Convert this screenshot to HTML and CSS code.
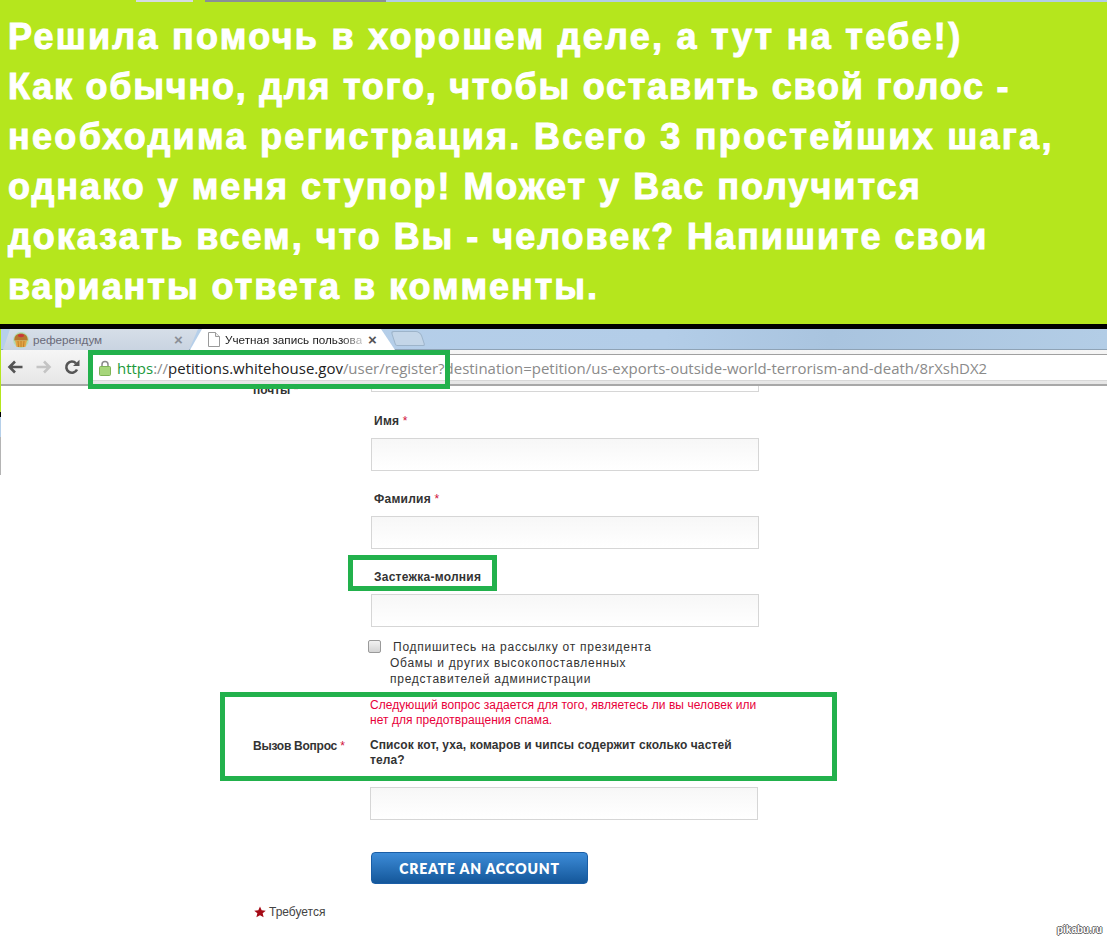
FILE: index.html
```html
<!DOCTYPE html>
<html lang="ru">
<head>
<meta charset="utf-8">
<title>Решила помочь в хорошем деле</title>
<link rel="stylesheet" href="styles.css">
</head>
<body>
<div class="screen">
  <div class="strip">
    <span class="s s1"></span><span class="s s2"></span><span class="s s3"></span><span class="s s4"></span><span class="s s5"></span>
  </div>
  <div class="banner">
    <p class="banner-text"><span class="ln l1">Решила помочь в хорошем деле, а тут на тебе!)</span><span class="ln l2">Как обычно, для того, чтобы оставить свой голос -</span><span class="ln l3">необходима регистрация. Всего 3 простейших шага,</span><span class="ln l4">однако у меня ступор! Может у Вас получится</span><span class="ln l5">доказать всем, что Вы - человек? Напишите свои</span><span class="ln l6">варианты ответа в комменты.</span></p>
  </div>
  <div class="rule"></div>

  <div class="page">
    <div class="sliver">
      <span class="sl-green"></span><span class="sl-black"></span><span class="sl-blue"></span><span class="sl-gray"></span>
    </div>
    <div class="main">
      <div class="tabs">
        <div class="tab tab-off">
          <svg class="fav" viewBox="0 0 16 16" width="16" height="16">
            <circle cx="8" cy="8" r="7.9" fill="#9ce08a" opacity=".55"/>
            <path d="M1.300 8.500C1 4 4 1.500 8 1.500S15 4 14.700 8.500z" fill="#b5782f"/>
            <ellipse cx="8" cy="3.600" rx="3" ry="1.700" fill="#c9363a"/>
            <path d="M2 8.500h12l-1.600 6.500H3.600z" fill="#e3a545"/>
            <path d="M5 9l.6 6M8 9v6M11 9l-.6 6" stroke="#b87a24" stroke-width=".8"/>
          </svg>
          <span class="tab-title">референдум</span>
          <span class="tab-x off">×</span>
        </div>
        <div class="tab tab-on">
          <svg class="doc" viewBox="0 0 12 15" width="12" height="15">
            <path d="M.5.500h7l4 4v10H.500z" fill="#fff" stroke="#9a9a9a"/>
            <path d="M7.500.500v4h4" fill="#eee" stroke="#9a9a9a"/>
          </svg>
          <span class="tab-title dark">Учетная запись пользова</span>
          <span class="tab-x on">×</span>
        </div>
        <div class="tab-new"></div>
      </div>
      <div class="toolbar">
        <svg class="nav" viewBox="0 0 16 14" width="16" height="14"><path d="M8 1.500 2.500 7 8 12.500M3 7h12.500" fill="none" stroke="#555" stroke-width="2.600"/></svg>
        <svg class="nav" viewBox="0 0 16 14" width="16" height="14"><path d="M8 1.500 13.500 7 8 12.500M13 7H.5" fill="none" stroke="#c4c4c4" stroke-width="2.600"/></svg>
        <svg class="nav reload" viewBox="0 0 16 16" width="16" height="16"><path d="M13 10.500A5.600 5.600 0 1 1 12 4.300" fill="none" stroke="#555" stroke-width="2.600"/><path d="M9 7h6.500V.800z" fill="#555"/></svg>
        <div class="omnibox">
          <svg class="lock" viewBox="0 0 12 16" width="12" height="16">
            <path d="M3 7V4.500a3 3 0 0 1 6 0V7" fill="none" stroke="#8a8a8a" stroke-width="1.500"/>
            <rect x=".5" y="6.500" width="11" height="9" rx="1" fill="#a6d67a" stroke="#7fb356"/>
          </svg>
          <span class="url"><span class="https">https</span><span class="path">://</span><span class="host">petitions.whitehouse.gov</span><span class="path">/user/register?destination=petition/us-exports-outside-world-terrorism-and-death/8rXshDX2</span></span>
        </div>
      </div>

      <form class="form">
        <div class="row row-email">
          <div class="side-label clipped">почты <em>*</em></div>
          <div class="input stub"></div>
        </div>
        <div class="field f-name">
          <label class="label">Имя <em>*</em></label>
          <div class="input"></div>
        </div>
        <div class="field f-last">
          <label class="label">Фамилия <em>*</em></label>
          <div class="input"></div>
        </div>
        <div class="field f-zip">
          <label class="label">Застежка-молния</label>
          <div class="input"></div>
        </div>
        <div class="subscribe">
          <span class="checkbox"></span>
          <p class="sub-text"><span class="sub-first">Подпишитесь на рассылку от президента</span><br>Обамы и других высокопоставленных<br>представителей администрации</p>
        </div>
        <div class="challenge">
          <div class="side-label ch-label">Вызов Вопрос <em>*</em></div>
          <div class="ch-body">
            <p class="warn">Следующий вопрос задается для того, являетесь ли вы человек или нет для предотвращения спама.</p>
            <p class="question">Список кот, уха, комаров и чипсы содержит сколько частей тела?</p>
            <div class="input"></div>
            <button class="submit" type="button">CREATE AN ACCOUNT</button>
          </div>
        </div>
        <div class="required">
          <svg viewBox="0 0 24 24" width="12" height="12"><path d="M12 1l3.300 7.600 8.200.7-6.200 5.400 1.900 8L12 18.500 4.800 22.700l1.900-8L.5 9.300l8.200-.7z" fill="#a50a16"/></svg>
          <span>Требуется</span>
        </div>
      </form>
    </div>
  </div>

  <div class="mark mark-url"></div>
  <div class="mark mark-zip"></div>
  <div class="mark mark-q"></div>
  <div class="watermark">pikabu.ru</div>
</div>
</body>
</html>
```
FILE: styles.css
```css
* { box-sizing: border-box; }
html, body { margin: 0; padding: 0; background: #fff; }
.screen { position: relative; width: 1107px; height: 941px; overflow: hidden; font-family: "Liberation Sans", Arial, sans-serif; }

.strip { display: flex; height: 2px; background: #b5e61d; }
.s { display: block; height: 2px; }
.s1 { width: 136px; }
.s2 { width: 57px; background: #d5dbe2; }
.s3 { width: 12px; background: #b5e61d; }
.s4 { width: 181px; background: #8a8f96; }
.s5 { flex: 1; background: #b3cde6; }

.banner { height: 322px; background: #b5e61d; padding: 10px 0 0 8px; }
.banner-text { margin: 0; color: #fff; font: bold 36px/50px "Liberation Sans", Arial, sans-serif; -webkit-text-stroke: 1px #fff; white-space: nowrap; }
.ln { display: block; }
.l1 { letter-spacing: 2.27px; }
.l2 { letter-spacing: 1.76px; }
.l3 { letter-spacing: 2.29px; }
.l4 { letter-spacing: 2px; }
.l5 { letter-spacing: 1.98px; }
.l6 { letter-spacing: 1.96px; }
.rule { height: 5px; background: #000; }

.page { display: flex; }
.sliver { width: 1px; flex: none; display: flex; flex-direction: column; }
.sliver span { display: block; width: 1px; }
.sl-green { height: 83px; background: #b5e61d; }
.sl-black { height: 5px; background: #000; }
.sl-blue { height: 20px; background: #b5cfe9; }
.sl-gray { height: 38px; background: #b4b4b4; }
.main { flex: 1; min-width: 0; }

.tabs { display: flex; height: 21px; background: linear-gradient(90deg, #b7d0ea, #b3cde8 60%, #a9c4df 75%, #b3cde6); padding-left: 2px; border-bottom: 1px solid #8fa3b6; }
.tab { display: flex; align-items: center; height: 21px; flex: none; }
.tab-off { width: 195px; padding-left: 10px; background: linear-gradient(#d6dee8, #c9d4e1); clip-path: polygon(7px 0, 100% 0, 186px 100%, 0 100%); }
.fav { flex: none; }
.tab-on { width: 205px; margin-left: -8px; padding-left: 18px; background: #fff; clip-path: polygon(12px 0, 191px 0, 100% 100%, 0 100%); }
.doc { flex: none; }
.tab-title { font: 11.700px "Liberation Sans", sans-serif; color: #6a6a78; margin-left: 4px; white-space: nowrap; width: 140px; }
.tab-title.dark { color: #222; width: 137px; margin-left: 5px; -webkit-mask-image: linear-gradient(90deg, #000 85%, rgba(0,0,0,.25)); mask-image: linear-gradient(90deg, #000 85%, rgba(0,0,0,.25)); }
.tab-x { font: bold 15px/1 "Liberation Sans", sans-serif; }
.tab-x.off { color: #8a8f96; margin-left: 1px; }
.tab-x.on { color: #555; margin-left: 6px; }
.tab-new { width: 30px; height: 15px; margin: 2px 0 0 -2px; background: #c4d6e8; border: 1px solid #9db4ca; border-radius: 3px 5px 2px 2px; transform: skewX(18deg); }

.toolbar { display: flex; align-items: center; height: 36px; padding-left: 6px; background: linear-gradient(#f6f6f6, #e6e6e6); border-bottom: 2px solid #a8a8a8; }
.nav { flex: none; margin-right: 13px; }
.reload { margin-right: 12px; margin-left: -1px; }
.omnibox { flex: 1; height: 27px; align-self: flex-start; margin-top: 4px; display: flex; align-items: center; padding-left: 7px; background: #fff; border-top: 1px solid #a0a0a0; border-bottom: 1px solid #d8d8d8; }
.lock { flex: none; }
.url { margin-left: 6px; font: 14.970px "Open Sans", "Noto Sans", sans-serif; white-space: nowrap; color: #8a8a8a; }
.https { color: #1c9a3c; }
.host { color: #222; }

.form { font-size: 12px; color: #333; height: 555px; }
em { font-style: normal; font-weight: normal; color: #d0103a; }
.row-email { display: flex; height: 7px; }
.side-label { font-weight: bold; font-size: 12px; color: #333; }
.clipped { width: 370px; padding-left: 252px; height: 10px; overflow: hidden; line-height: 8px; }
.input { width: 388px; height: 33px; border: 1px solid #d6d6d6; background: linear-gradient(#f7f7f7, #fff); }
.stub { height: 6px; border-top: 0; background: #fff; }
.field { padding-left: 370px; }
.label { display: block; height: 20px; padding-left: 3px; font-weight: bold; line-height: 14px; letter-spacing: .25px; color: #333; }
.f-name { padding-top: 21px; }
.f-name .label { height: 24px; }
.f-last { padding-top: 21px; }
.f-last .label { height: 24px; }
.f-zip { padding-top: 21px; }
.f-zip .label { height: 24px; }

.subscribe { display: flex; padding: 13px 0 0 367px; height: 65px; }
.checkbox { flex: none; width: 13px; height: 13px; border: 1px solid #9a9a9a; border-radius: 2px; background: linear-gradient(#f2f2f2, #d4d4d4); }
.sub-text { margin: -1px 0 0 9px; line-height: 16px; letter-spacing: .75px; color: #333; white-space: nowrap; }
.sub-first { margin-left: 3px; }

.challenge { display: flex; margin-top: 2px; }
.ch-label { width: 369px; padding-left: 252px; padding-top: 44px; line-height: 16px; letter-spacing: -.25px; }
.ch-body { width: 388px; }
.warn { margin: 4px 0 0; color: #e8003a; line-height: 15px; font-size: 12px; letter-spacing: .05px; }
.question { margin: 10px 0 0; font-weight: bold; line-height: 15px; letter-spacing: .1px; color: #333; }
.ch-body .input { margin-top: 19px; }
.submit { display: block; width: 217px; height: 32px; margin: 32px 0 0 1px; padding: 0; border: 1px solid #1a5ea6; border-radius: 4px; background: linear-gradient(#3d8cd8, #14579a); color: #fff; font: 800 14px "Lato", sans-serif; letter-spacing: .8px; }
.required { display: flex; align-items: center; gap: 3px; padding: 22px 0 0 253px; color: #444; line-height: 12px; }

.mark { position: absolute; border: 5px solid #22b14c; }
.mark-url { left: 88px; top: 350px; width: 362px; height: 39px; }
.mark-zip { left: 348px; top: 555px; width: 149px; height: 36px; }
.mark-q { left: 220px; top: 692px; width: 617px; height: 89px; }
.watermark { position: absolute; right: 5px; top: 924px; font: bold 10px/12px "Liberation Sans", sans-serif; color: #fff; text-shadow: -1px 0 #666, 1px 0 #666, 0 -1px #666, 0 1px #666; }
```
